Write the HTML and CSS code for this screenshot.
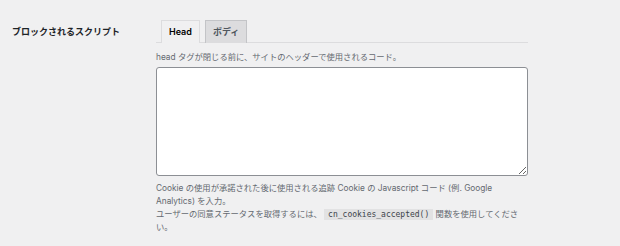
FILE: index.html
```html
<!DOCTYPE html>
<html lang="ja">
<head>
<meta charset="utf-8">
<link rel="stylesheet" href="styles.css">
</head>
<body>
<div class="row">
  <div class="label">ブロックされるスクリプト</div>
  <div class="field">
    <div class="tabs">
      <span class="tab active">Head</span>
      <span class="tab">ボディ</span>
    </div>
    <p class="desc top">head タグが閉じる前に、サイトのヘッダーで使用されるコード。</p>
    <textarea class="code-input"></textarea>
    <p class="desc bottom">Cookie の使用が承諾された後に使用される追跡 Cookie の Javascript コード (例. Google Analytics) を入力。<br>ユーザーの同意ステータスを取得するには、 <code>cn_cookies_accepted()</code> 関数を使用してください。</p>
  </div>
</div>
</body>
</html>
```

FILE: styles.css
```css
html, body {
  margin: 0;
  padding: 0;
  background: #f0f0f1;
  font-family: Inter, "Noto Sans CJK JP", sans-serif;
}

.row {
  display: flex;
  padding-top: 20px;
}

.label {
  width: 144px;
  padding-left: 12px;
  line-height: 23px;
  font-size: 9px;
  font-weight: 700;
  color: #1d2327;
}

.field {
  width: 372px;
}

.tabs {
  display: flex;
  gap: 5px;
  padding-left: 5px;
  border-bottom: 1px solid #dcdcde;
  height: 22px;
}

.tab {
  display: block;
  box-sizing: border-box;
  height: 23px;
  line-height: 21px;
  padding: 0 7px;
  font-size: 9px;
  font-weight: 600;
  color: #50575e;
  background: #dcdcde;
  border: 1px solid #c3c4c7;
  border-bottom: none;
}

.tab.active {
  background: #f0f0f1;
  color: #000;
  border-color: #dcdcde;
}

.desc {
  margin: 0;
  font-size: 8.3px;
  color: #646970;
}

.desc.top {
  line-height: 12px;
  margin-top: 8px;
}

.code-input {
  display: block;
  box-sizing: border-box;
  width: 372px;
  height: 109px;
  margin: 4px 0 0;
  background: #fff;
  border: 1px solid #8c8f94;
  border-radius: 3px;
  padding: 0;
}

.desc.bottom {
  margin-top: 6px;
  line-height: 13px;
}

code {
  font-family: "DejaVu Sans Mono", "Liberation Mono", monospace;
  font-size: 8px;
  line-height: 11px;
  background: #e2e2e3;
  padding: 1px 4px;
  color: #3c434a;
}
```
